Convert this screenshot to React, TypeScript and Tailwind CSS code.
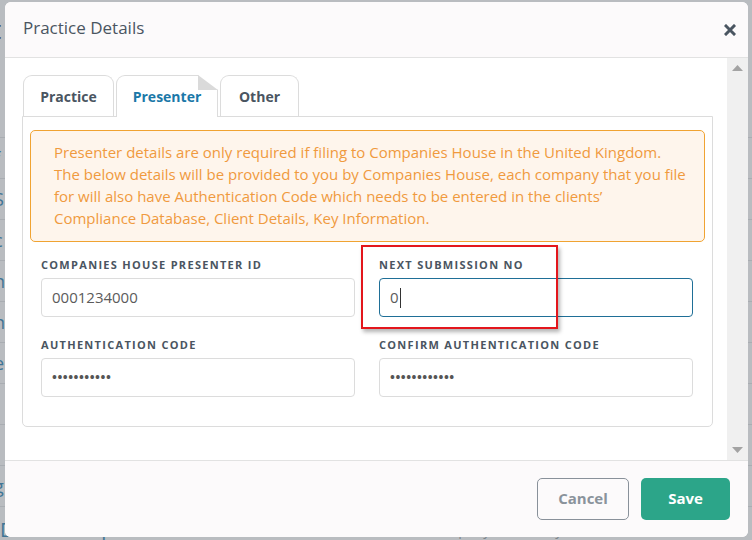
import React from "react";

const font = { fontFamily: '"Open Sans", "Liberation Sans", sans-serif' };

function Field({
  label,
  value,
  focused,
  mono,
}: {
  label: string;
  value: string;
  focused?: boolean;
  mono?: boolean;
}) {
  return (
    <div className="flex flex-col">
      <label className="text-[11px] leading-[15px] font-bold tracking-[1.3px] text-[#4a5561] mb-[6px]">
        {label}
      </label>
      <div
        className={
          "h-[39px] rounded-[4px] border flex items-center px-[10px] bg-white " +
          (focused ? "border-[#1f6f97]" : "border-[#dcdcdc]")
        }
      >
        <span
          className={
            mono
              ? "text-[13px] tracking-[0.5px] text-[#555] font-bold"
              : "text-[15px] text-[#5b5b5b]"
          }
        >
          {value}
        </span>
        {focused && <span className="w-px h-[20px] bg-[#333] ml-[1px]" />}
      </div>
    </div>
  );
}

export default function App() {
  const rows = ["f", "S", "c", "n", "n", "e", "", "", "g"];

  return (
    <div className="relative w-[752px] h-[540px] overflow-hidden bg-[#b9bcc0]" style={font}>
      {/* page behind the modal */}
      <div className="flex flex-col">
        <div className="h-[58px] flex items-center text-[26px] text-[#3e454c] -ml-[8px]">t</div>
        <div className="h-[80px] border-b border-[#a9adb2]" />
        {rows.map((r, i) => (
          <div
            key={i}
            className="h-[41px] border-b border-[#a9adb2] flex items-center text-[18px] text-[#3f7596] -ml-[6px]"
          >
            {r}
          </div>
        ))}
        <div className="flex items-start mt-[8px]">
          <span className="text-[20px] text-[#3f7596] w-[428px]">Due Descriptions</span>
          <span className="text-[14px] text-[#7d858c] pt-[4px]">Company Limited By Shares</span>
        </div>
      </div>

      {/* modal */}
      <div className="absolute left-[5px] top-[2px] w-[743px] h-[535px] bg-white rounded-[6px] overflow-hidden flex flex-col">
        <div className="h-[56px] shrink-0 bg-[#fcfafb] border-b border-[#e2e2e2] flex items-center justify-between pl-[18px] pr-[12px] pb-[3px]">
          <h2 className="text-[17px] text-[#4a5561]">Practice Details</h2>
          <svg width="12" height="12" viewBox="0 0 12 12" className="mt-[3px]">
            <path d="M2 2 L10 10 M10 2 L2 10" stroke="#4a5561" strokeWidth="3" strokeLinecap="square" />
          </svg>
        </div>

        <div className="flex-1 flex min-h-0">
          <div className="flex-1 pl-[17px] pr-[14px] pt-[16px]">
            {/* tabs */}
            <div className="flex items-end gap-[2px] h-[42px] pl-[1px]">
              <div className="h-[41px] w-[91px] rounded-t-[9px] border border-b-0 border-[#dcdcdc] flex items-center justify-center text-[14px] font-bold text-[#4a5561]">
                Practice
              </div>
              <div className="relative h-[42px] w-[102px] rounded-tl-[9px] border border-b-0 border-[#dcdcdc] bg-white flex items-center justify-center text-[14px] font-bold text-[#1b78a8] -mb-px z-10">
                Presenter
                <svg className="absolute -top-px -right-px" width="20" height="15" viewBox="0 0 20 15">
                  <polygon points="0,0 20,0 20,15" fill="#ffffff" />
                  <polygon points="0,0 0,15 20,15" fill="#dadada" />
                </svg>
              </div>
              <div className="h-[41px] w-[79px] rounded-t-[9px] border border-b-0 border-[#dcdcdc] flex items-center justify-center text-[14px] font-bold text-[#4a5561]">
                Other
              </div>
            </div>

            {/* panel */}
            <div className="border border-[#dcdcdc] rounded-b-[5px] w-[691px] pt-[13px] pb-[29px]">
              <div className="mx-[7px] rounded-[5px] border border-[#f0a332] bg-[#fef5ec] pl-[23px] pr-[8px] pt-[10px] pb-[12px] text-[15px] leading-[22px] text-[#f09a3e] whitespace-nowrap">
                Presenter details are only required if filing to Companies House in the United Kingdom.
                <br />
                The below details will be provided to you by Companies House, each company that you file
                <br />
                for will also have Authentication Code which needs to be entered in the clients’
                <br />
                Compliance Database, Client Details, Key Information.
              </div>

              <div className="relative grid grid-cols-2 gap-x-[24px] gap-y-[20px] pl-[18px] pr-[19px] mt-[15px]">
                <Field label="COMPANIES HOUSE PRESENTER ID" value="0001234000" />
                <Field label="NEXT SUBMISSION NO" value="0" focused />
                <Field label="AUTHENTICATION CODE" value="•••••••••••" mono />
                <Field label="CONFIRM AUTHENTICATION CODE" value="••••••••••••" mono />

                <div className="absolute left-[338px] top-[-12px] w-[197px] h-[84px] border-2 border-[#e3161c] shadow-[2px_3px_4px_rgba(0,0,0,0.3)] pointer-events-none" />
              </div>
            </div>
          </div>

          {/* scrollbar */}
          <div className="w-[21px] bg-[#f0f0f0] flex flex-col items-center justify-between py-[7px]">
            <svg width="11" height="6" viewBox="0 0 11 6">
              <polygon points="0,6 5.5,0 11,6" fill="#a3a3a3" />
            </svg>
            <svg width="11" height="6" viewBox="0 0 11 6">
              <polygon points="0,0 11,0 5.5,6" fill="#a3a3a3" />
            </svg>
          </div>
        </div>

        <div className="h-[77px] shrink-0 bg-[#fcfafb] border-t border-[#e2e2e2] flex items-center justify-end gap-[12px] pr-[18px] pb-[1px]">
          <button className="w-[92px] h-[42px] rounded-[5px] border border-[#89919a] text-[15px] font-bold text-[#8a939b]">
            Cancel
          </button>
          <button className="w-[89px] h-[42px] rounded-[5px] bg-[#2ca589] text-[15px] font-bold text-white">
            Save
          </button>
        </div>
      </div>
    </div>
  );
}
